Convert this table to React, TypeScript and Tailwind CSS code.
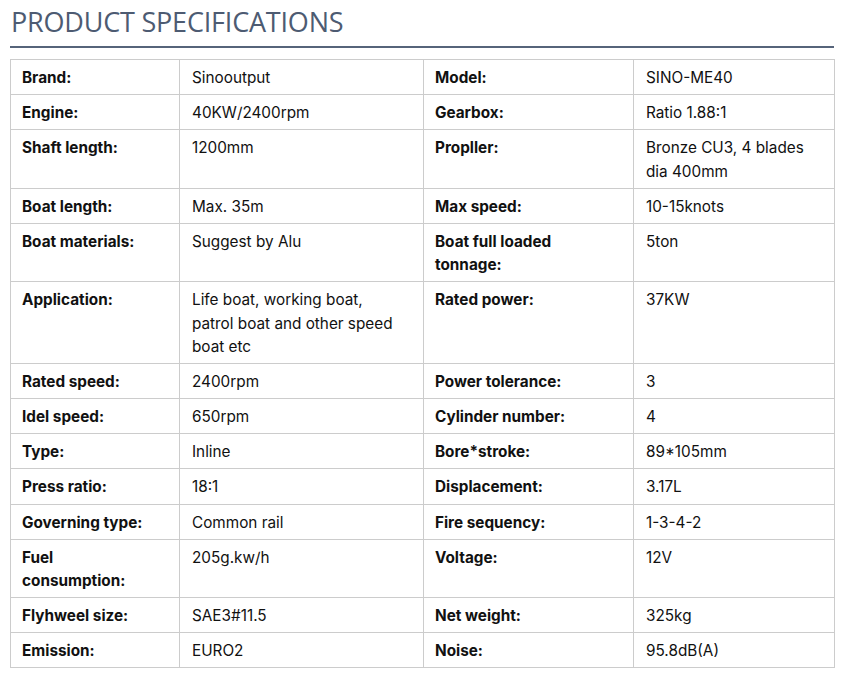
const specs: [string, string, string, string][] = [
  ["Brand:", "Sinooutput", "Model:", "SINO-ME40"],
  ["Engine:", "40KW/2400rpm", "Gearbox:", "Ratio 1.88:1"],
  ["Shaft length:", "1200mm", "Propller:", "Bronze CU3, 4 blades dia 400mm"],
  ["Boat length:", "Max. 35m", "Max speed:", "10-15knots"],
  ["Boat materials:", "Suggest by Alu", "Boat full loaded tonnage:", "5ton"],
  ["Application:", "Life boat, working boat, patrol boat and other speed boat etc", "Rated power:", "37KW"],
  ["Rated speed:", "2400rpm", "Power tolerance:", "3"],
  ["Idel speed:", "650rpm", "Cylinder number:", "4"],
  ["Type:", "Inline", "Bore*stroke:", "89*105mm"],
  ["Press ratio:", "18:1", "Displacement:", "3.17L"],
  ["Governing type:", "Common rail", "Fire sequency:", "1-3-4-2"],
  ["Fuel consumption:", "205g.kw/h", "Voltage:", "12V"],
  ["Flyhweel size:", "SAE3#11.5", "Net weight:", "325kg"],
  ["Emission:", "EURO2", "Noise:", "95.8dB(A)"],
];

export default function App() {
  return (
    <div className="w-[844px] px-[10px] pt-[4px] bg-white">
      <h2 className="font-['Open_Sans',sans-serif] text-[27px] leading-[36px] tracking-[-0.2px] pl-[1px] text-[#4d5b72] pb-[6px] border-b-2 border-[#56647a]">
        PRODUCT SPECIFICATIONS
      </h2>
      <table className="mt-[11px] w-[825px] table-fixed border-collapse font-['Inter',sans-serif] text-[15.3px] leading-[23.4px] text-[#111]">
        <colgroup>
          <col className="w-[169px]" />
          <col className="w-[244px]" />
          <col className="w-[210px]" />
          <col className="w-[201px]" />
        </colgroup>
        <tbody>
          {specs.map((row, i) => (
            <tr key={i}>
              <td className="border border-[#cccccc] align-top pl-[11px] pr-[20px] pt-[6px] pb-[4.7px] font-bold">{row[0]}</td>
              <td className="border border-[#cccccc] align-top pl-[12px] pr-[20px] pt-[6px] pb-[4.7px]">{row[1]}</td>
              <td className="border border-[#cccccc] align-top pl-[11px] pr-[20px] pt-[6px] pb-[4.7px] font-bold">{row[2]}</td>
              <td className="border border-[#cccccc] align-top pl-[12px] pr-[20px] pt-[6px] pb-[4.7px]">{row[3]}</td>
            </tr>
          ))}
        </tbody>
      </table>
    </div>
  );
}
